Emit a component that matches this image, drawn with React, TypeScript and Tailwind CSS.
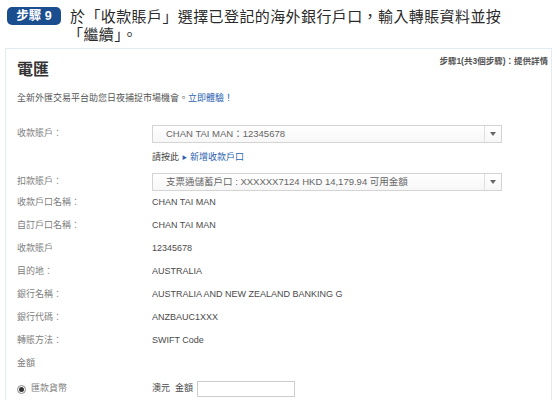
import React from "react";

const FONT = { fontFamily: '"Liberation Sans", "Noto Sans CJK TC", sans-serif' };

function Select({ text }: { text: string }) {
  return (
    <div className="flex h-[18px] w-[350px] items-stretch border border-[#d4d4d4] bg-gradient-to-b from-white to-[#f7f7f7]">
      <div className="flex flex-1 items-center pl-[13px] text-[9.5px] text-[#666] whitespace-nowrap overflow-hidden">
        {text}
      </div>
      <div className="flex w-[17px] items-center justify-center border-l border-[#e0e0e0]">
        <svg width="6" height="4" viewBox="0 0 6 4">
          <path d="M0 0 L6 0 L3 4 Z" fill="#666" />
        </svg>
      </div>
    </div>
  );
}

function Row({ label, value }: { label: string; value?: React.ReactNode }) {
  return (
    <div className="flex h-[23px] items-center">
      <div className="w-[135px] text-[9px] text-[#808080]">{label}</div>
      <div className="text-[9px] text-[#4a4a4a]">{value}</div>
    </div>
  );
}

export default function App() {
  return (
    <div className="relative h-[400px] w-[557px] overflow-hidden bg-white" style={FONT}>
      <div className="flex items-start pl-[7px] pt-[7px]">
        <div className="flex h-[18px] w-[54px] items-center justify-center rounded-[5px] bg-[#1b4e8e] text-[12.5px] font-bold text-white">
          步驟 9
        </div>
        <div className="ml-[9px] mt-[1px] text-[15px] leading-[18px] tracking-[0.4px] text-[#2a2a2a]">
          <div>於「收款賬戶」選擇已登記的海外銀行戶口，輸入轉賬資料並按</div>
          <div className="-ml-[2px]">「繼續」。</div>
        </div>
      </div>

      <div className="ml-[5px] mt-[4px] h-[400px] w-[547px] border border-[#e2ebf2] pl-[11px]">
        <div className="flex items-start justify-between">
          <div className="mt-[11px] text-[16px] font-bold leading-[20px] text-[#333]">電匯</div>
          <div className="mr-[3px] mt-[6px] text-[8.5px] font-bold leading-[12px] text-[#555]">
            步驟1(共3個步驟)：提供詳情
          </div>
        </div>
        <div className="mt-[12px] text-[9px] leading-[12px] text-[#555]">
          全新外匯交易平台助您日夜捕捉市場機會。
          <span className="text-[#2a63b0]">立即體驗！</span>
        </div>

        <div className="mt-[21px] flex h-[18px] items-center">
          <div className="w-[135px] text-[9px] text-[#808080]">收款賬戶：</div>
          <Select text="CHAN TAI MAN：12345678" />
        </div>
        <div className="flex h-[30px] items-center">
          <div className="w-[135px]" />
          <div className="flex items-center text-[9px] text-[#444]">
            <span>請按此</span>
            <span className="mx-[3px] text-[5px] text-[#2a63b0]">▶</span>
            <span className="text-[#2a63b0]">新增收款戶口</span>
          </div>
        </div>
        <div className="flex h-[18px] items-center">
          <div className="w-[135px] text-[9px] text-[#808080]">扣款賬戶：</div>
          <Select text="支票通儲蓄戶口 : XXXXXX7124 HKD 14,179.94  可用金額" />
        </div>

        <Row label="收款戶口名稱：" value="CHAN TAI MAN" />
        <Row label="自訂戶口名稱：" value="CHAN TAI MAN" />
        <Row label="收款賬戶" value="12345678" />
        <Row label="目的地：" value="AUSTRALIA" />
        <Row label="銀行名稱：" value="AUSTRALIA AND NEW ZEALAND BANKING G" />
        <Row label="銀行代碼：" value="ANZBAUC1XXX" />
        <Row label="轉賬方法：" value="SWIFT Code" />
        <Row label="金額" />

        <div className="mt-[2px] flex h-[24px] items-center">
          <div className="flex w-[135px] items-center text-[9px] text-[#808080]">
            <span className="flex h-[9px] w-[9px] items-center justify-center rounded-full border border-[#888] bg-white">
              <span className="h-[5px] w-[5px] rounded-full bg-[#333]" />
            </span>
            <span className="ml-[5px]">匯款貨幣</span>
          </div>
          <div className="flex items-center text-[9px] text-[#4a4a4a]">
            <span>澳元&nbsp;&nbsp;金額</span>
            <div className="ml-[4px] h-[16px] w-[98px] border border-[#ccc] bg-white" />
          </div>
        </div>
      </div>
    </div>
  );
}
